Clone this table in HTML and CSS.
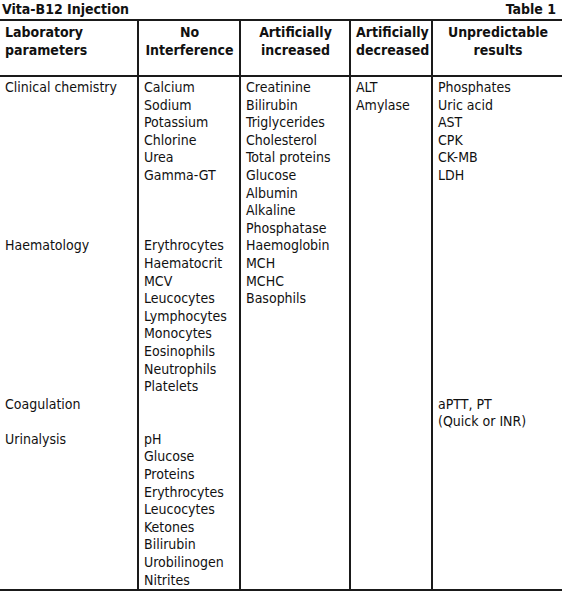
FILE: index.html
```html
<!DOCTYPE html>
<html>

<head>
    <title>Vita-B12 Injection</title>
    <link rel="stylesheet" href="styles.css">
</head>

<body>
    <div class="caption">
        <span>Vita-B12 Injection</span>
        <span>Table 1</span>
    </div>
    <table class="lab-table">
        <colgroup>
            <col class="col-param">
            <col class="col-none">
            <col class="col-inc">
            <col class="col-dec">
            <col class="col-unp">
        </colgroup>
        <thead>
            <tr>
                <th class="left">Laboratory<br>parameters</th>
                <th>No<br>Interference</th>
                <th>Artificially<br>increased</th>
                <th>Artificially<br>decreased</th>
                <th>Unpredictable<br>results</th>
            </tr>
        </thead>
        <tbody>
            <tr class="first">
                <td>Clinical chemistry</td>
                <td>Calcium<br>Sodium<br>Potassium<br>Chlorine<br>Urea<br>Gamma-GT</td>
                <td>Creatinine<br>Bilirubin<br>Triglycerides<br>Cholesterol<br>Total proteins<br>Glucose<br>Albumin<br>Alkaline<br>Phosphatase</td>
                <td>ALT<br>Amylase</td>
                <td>Phosphates<br>Uric acid<br>AST<br>CPK<br>CK-MB<br>LDH</td>
            </tr>
            <tr>
                <td>Haematology</td>
                <td>Erythrocytes<br>Haematocrit<br>MCV<br>Leucocytes<br>Lymphocytes<br>Monocytes<br>Eosinophils<br>Neutrophils<br>Platelets</td>
                <td>Haemoglobin<br>MCH<br>MCHC<br>Basophils</td>
                <td></td>
                <td></td>
            </tr>
            <tr>
                <td>Coagulation</td>
                <td></td>
                <td></td>
                <td></td>
                <td>aPTT, PT<br>(Quick or INR)</td>
            </tr>
            <tr class="last">
                <td>Urinalysis</td>
                <td>pH<br>Glucose<br>Proteins<br>Erythrocytes<br>Leucocytes<br>Ketones<br>Bilirubin<br>Urobilinogen<br>Nitrites</td>
                <td></td>
                <td></td>
                <td></td>
            </tr>
        </tbody>
    </table>
</body>

</html>
```

FILE: styles.css
```css
body {
    margin: 0;
    background-color: #fff;
    color: #111;
    font-family: "DejaVu Sans Condensed", "Liberation Sans Narrow", "Arial Narrow", sans-serif;
    font-size: 14px;
    line-height: 17.6px;
}

.caption {
    display: flex;
    justify-content: space-between;
    height: 19px;
    padding: 1px 6px 0 2px;
    box-sizing: border-box;
    font-weight: bold;
}

.lab-table {
    width: 562px;
    border-collapse: collapse;
    table-layout: fixed;
    border-top: 2px solid #1a1a1a;
    border-bottom: 2px solid #1a1a1a;
}

.col-param {
    width: 138px;
}

.col-none {
    width: 102px;
}

.col-inc {
    width: 110px;
}

.col-dec {
    width: 82px;
}

th,
td {
    vertical-align: top;
    padding: 0 4px 0 5px;
    white-space: nowrap;
}

th + th,
td + td {
    border-left: 2px solid #1a1a1a;
}

th {
    height: 51px;
    padding-top: 3px;
    padding-bottom: 0;
    text-align: center;
    font-weight: bold;
    border-bottom: 2px solid #1a1a1a;
}

th.left {
    text-align: left;
}

tr.first td {
    padding-top: 2px;
}
```
